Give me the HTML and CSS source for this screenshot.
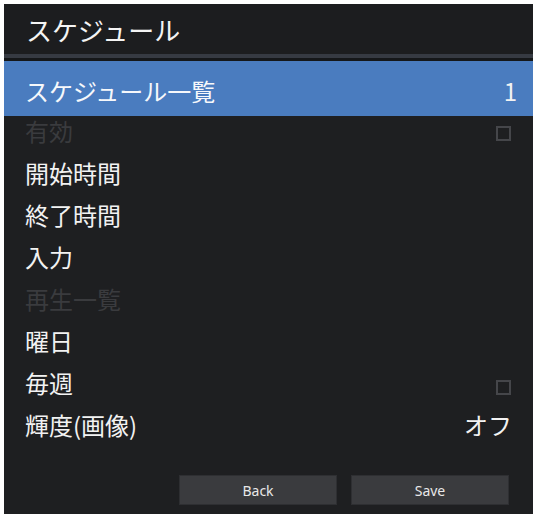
FILE: index.html
```html
<!DOCTYPE html>
<html lang="ja">
<head>
<meta charset="utf-8">
<title>スケジュール</title>
<link rel="stylesheet" href="styles.css">
</head>
<body>
<div class="panel">
  <header class="title-bar">スケジュール</header>
  <div class="sep"></div>
  <ul class="list">
    <li class="row row-selected"><span class="label">スケジュール一覧</span><span class="value value-num">1</span></li>
    <li class="row row-disabled"><span class="label">有効</span><span class="check"></span></li>
    <li class="row"><span class="label">開始時間</span></li>
    <li class="row"><span class="label">終了時間</span></li>
    <li class="row"><span class="label">入力</span></li>
    <li class="row row-disabled"><span class="label">再生一覧</span></li>
    <li class="row"><span class="label">曜日</span></li>
    <li class="row"><span class="label">毎週</span><span class="check check-low"></span></li>
    <li class="row"><span class="label">輝度(画像)</span><span class="value">オフ</span></li>
  </ul>
  <footer class="actions">
    <button class="btn">Back</button>
    <button class="btn">Save</button>
  </footer>
</div>
</body>
</html>
```

FILE: styles.css
```css
html, body {
  margin: 0;
  padding: 0;
  background: #ffffff;
}

body {
  padding: 4px 4px 3px 4px;
  font-family: "Noto Sans CJK JP", "Noto Sans", sans-serif;
}

.panel {
  width: 529px;
  height: 510px;
  background: #1e1f21;
  display: flex;
  flex-direction: column;
  box-sizing: border-box;
}

.title-bar {
  height: 50px;
  padding-left: 22px;
  display: flex;
  align-items: center;
  font-size: 26px;
  color: #f4f4f4;
  background: #1c1d1f;
  box-sizing: border-box;
}

.sep {
  height: 4px;
  background: #363a42;
  border-bottom: 3px solid #151719;
}

.list {
  list-style: none;
  margin: 0;
  padding: 0;
}

.row {
  height: 42px;
  padding: 0 21px 0 21px;
  display: flex;
  align-items: flex-start;
  justify-content: space-between;
  font-size: 24px;
  line-height: 29px;
  color: #f2f2f2;
  box-sizing: border-box;
}

.row-selected {
  height: 55px;
  align-items: center;
  padding-top: 3px;
  background: #4a7cbf;
  color: #f6f8fb;
}

.row-disabled {
  color: #3a3b3e;
}

.value {
  color: #f2f2f2;
}

.value-num {
  margin-right: -5px;
}

.check {
  width: 15px;
  height: 15px;
  margin-top: 10px;
  margin-right: 1px;
  border: 2px solid #45464a;
  box-sizing: border-box;
}

.check-low {
  margin-top: 12px;
}

.actions {
  margin-top: auto;
  padding: 0 24px 9px 0;
  display: flex;
  justify-content: flex-end;
  gap: 14px;
}

.btn {
  width: 158px;
  height: 30px;
  padding: 0;
  background: #3a3b3e;
  border: 1px solid #2e2f32;
  color: #e8e8e8;
  font-family: "Noto Sans", "Open Sans", sans-serif;
  font-size: 14px;
}
```
